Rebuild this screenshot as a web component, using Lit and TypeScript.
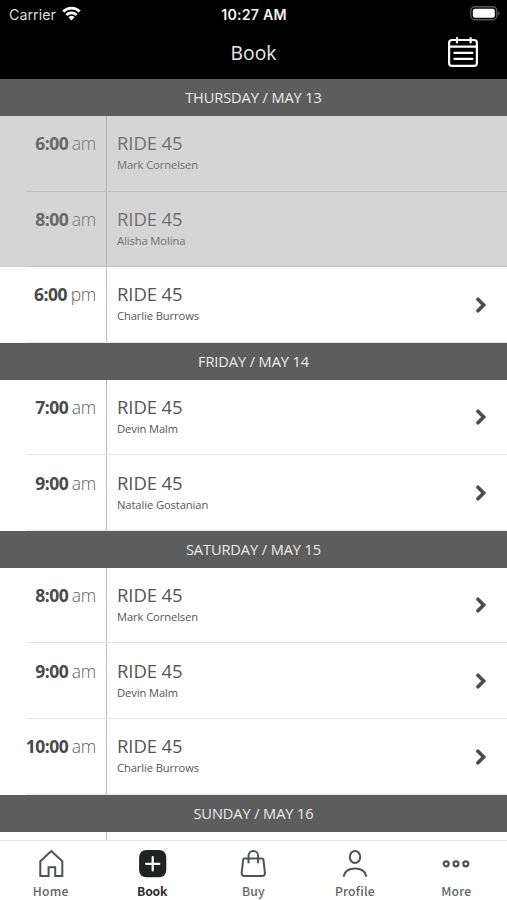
import { LitElement, html, css, svg } from "lit";
import { customElement, property } from "lit/decorators.js";
import { classMap } from "lit/directives/class-map.js";

interface Ride { time: string; half: string; coach: string; past?: boolean }
interface Day { label: string; rides: Ride[] }

const days: Day[] = [
  { label: "THURSDAY / MAY 13", rides: [
    { time: "6:00", half: "am", coach: "Mark Cornelsen", past: true },
    { time: "8:00", half: "am", coach: "Alisha Molina", past: true },
    { time: "6:00", half: "pm", coach: "Charlie Burrows" } ] },
  { label: "FRIDAY / MAY 14", rides: [
    { time: "7:00", half: "am", coach: "Devin Malm" },
    { time: "9:00", half: "am", coach: "Natalie Gostanian" } ] },
  { label: "SATURDAY / MAY 15", rides: [
    { time: "8:00", half: "am", coach: "Mark Cornelsen" },
    { time: "9:00", half: "am", coach: "Devin Malm" },
    { time: "10:00", half: "am", coach: "Charlie Burrows" } ] },
  { label: "SUNDAY / MAY 16", rides: [] },
];

@customElement("ride-row")
class RideRow extends LitElement {
  @property({ attribute: false }) ride!: Ride;
  static styles = css`
    :host { display: block; }
    .row { display: flex; height: 75.75px; color: #555; background: #fff; position: relative; }
    .past { background: #d5d5d5; color: #707070; }
    .time { width: 96px; flex: none; padding: 15.2px 10px 0 0; border-right: 1px solid #b9b9b9;
      display: flex; justify-content: flex-end; gap: 3.6px; font-size: 17.5px; line-height: 24px; }
    .time b { font-weight: 700; letter-spacing: -0.5px; color: #4a4a4a; }
    .past .time { border-color: #b2b2b2; }
    .past b { color: #686868; }
    .half { font-weight: 300; letter-spacing: -0.3px; color: #606060; }
    .past .half { color: #747474; }
    .info { flex: 1; padding: 14.2px 0 0 10px; }
    .name { font-size: 18.5px; line-height: 26px; letter-spacing: -0.1px; }
    .coach { font-size: 11.2px; line-height: 16px; margin-top: 1px; letter-spacing: -0.1px; }
    .chev { width: 12px; height: 18px; margin: 28.5px 20px 0 0; }
    .line { position: absolute; left: 26px; right: 0; bottom: 0; height: 1px; background: #e5e5e5; }
    .past .line { background: #c1c1c1; }
  `;
  render() {
    const r = this.ride;
    return html`<div class=${classMap({ row: true, past: !!r.past })}>
      <div class="time"><b>${r.time}</b><span class="half">${r.half}</span></div>
      <div class="info"><div class="name">RIDE 45</div><div class="coach">${r.coach}</div></div>
      ${r.past ? "" : html`<svg class="chev" viewBox="0 0 12 18"><path d="M2.9 3.2 8.7 9l-5.8 5.8" fill="none" stroke="#4c4c4c" stroke-width="3.6" stroke-linecap="round"/></svg>`}
      <div class="line"></div>
    </div>`;
  }
}

const tabs = [
  { label: "Home", icon: svg`<path d="M4.3 12.3 15.3 2l11 10.3V27h-7.1v-8.8h-6.6V27H4.3z" stroke-linejoin="miter"/>` },
  { label: "Book", icon: svg`<rect class="solid" x="2.1" y="1" width="27.2" height="27.2" rx="7"/><path class="plus" d="M15.7 8.2v13.2M9.1 14.8h13.2"/>` },
  { label: "Buy", icon: svg`<path d="M6.4 9.4h17.8q1 0 1.2 1l1.5 13.4q.2 3.2-2.6 3.2H6.3q-2.8 0-2.6-3.2l1.5-13.4q.2-1 1.2-1z"/><path d="M10.5 14.2V6.8a4.8 4.8 0 0 1 9.6 0v7.4"/>` },
  { label: "Profile", icon: svg`<ellipse cx="15" cy="8" rx="5.2" ry="6"/><path d="M3.8 27.8v-1c1.2-5 6-7.4 11.2-7.4s10 2.4 11.2 7.4v1"/>` },
  { label: "More", icon: svg`<g stroke-width="2.2"><circle cx="5.2" cy="14.8" r="2.5"/><circle cx="15" cy="14.8" r="2.5"/><circle cx="24.8" cy="14.8" r="2.5"/></g>` },
];

@customElement("app-root")
class AppRoot extends LitElement {
  static styles = css`
    :host { display: flex; flex-direction: column; width: 507px; height: 900px; overflow: hidden; background: #fff; font-family: "Open Sans", "Noto Sans", sans-serif; }
    .top { height: 79.2px; flex: none; background: #000; color: #ebebeb; }
    .status { height: 28px; display: grid; grid-template-columns: 1fr auto 1fr; align-items: center; font-family: Inter, Roboto, sans-serif; padding: 0 6px 0 9px; box-sizing: border-box; }
    .carrier { display: flex; align-items: center; gap: 6px; font-size: 14.3px; color: #dcdcdc; }
    .clock { font-weight: 600; font-size: 14.2px; letter-spacing: .2px; color: #f4f4f4; margin-left: -2px; }
    .wifi { width: 19px; height: 15px; margin-top: -2px; }
    .battery { width: 31px; height: 15px; justify-self: end; margin-top: -2px; }
    .bar { height: 51px; display: grid; grid-template-columns: 1fr auto 1fr; align-items: center; padding: 0 28px; }
    .title { grid-column: 2; font-size: 19.3px; line-height: 28px; margin-top: -2px; }
    .cal { width: 32px; height: 32px; justify-self: end; margin-top: -3px; }
    .list { flex: 1; min-height: 0; overflow: hidden; }
    .day { height: 36.6px; display: flex; align-items: center; justify-content: center; background: #5d5d5d; color: #ebebeb; font-size: 14.6px; letter-spacing: -0.1px; }
    .stub { width: 106px; height: 8px; border-right: 1px solid #b9b9b9; }
    .tabs { flex: none; height: 60px; box-sizing: border-box; border-top: 1px solid #e2e2e2; display: grid; grid-template-columns: repeat(5, 1fr); background: #fff; font-family: "Noto Sans CJK SC", "Noto Sans", sans-serif; }
    .tab { display: flex; flex-direction: column; align-items: center; color: #626466; font-size: 12.2px; font-weight: 500; letter-spacing: .2px; line-height: 16px; padding-top: 8px; }
    .tab svg { width: 30px; height: 30px; fill: none; stroke: #505355; stroke-width: 2; stroke-linejoin: round; margin-bottom: 4px; }
    .on { color: #2b2d2f; font-weight: 700; letter-spacing: -0.2px; }
    .solid { fill: #202224; stroke: none; }
    .tab .plus { stroke: #fff; stroke-width: 2.2; stroke-linecap: round; }
  `;
  render() {
    return html`
      <div class="top">
        <div class="status">
          <span class="carrier">Carrier
            <svg class="wifi" viewBox="0 0 20 15" fill="none" stroke="#fff" stroke-width="2.9"><path d="M1.3 5.4a12.4 12.4 0 0 1 17.4 0M4.6 9a7.7 7.7 0 0 1 10.8 0"/><path d="M10 14.8 6.8 11.4a4.6 4.6 0 0 1 6.4 0z" fill="#fff" stroke="none"/></svg>
          </span>
          <span class="clock">10:27 AM</span>
          <svg class="battery" viewBox="0 0 31 15"><rect x=".8" y=".8" width="26" height="13" rx="4" fill="none" stroke="#565656" stroke-width="1.4"/><rect x="2.8" y="2.8" width="22" height="9" rx="2.2" fill="#fff"/><path d="M28.4 5q2 2.3 0 4.6z" fill="#777"/></svg>
        </div>
        <div class="bar">
          <span class="title">Book</span>
          <svg class="cal" viewBox="0 0 32 32" fill="none" stroke="#fff" stroke-width="2.2" stroke-linecap="round"><rect x="2.1" y="4" width="27.8" height="25.9" rx="3"/><path d="M2 10.6h28M10 2v4.4M23.6 2v4.4"/><path d="M7.4 16.8h18M7.4 22.8h18"/></svg>
        </div>
      </div>
      <div class="list">
        ${days.map((d) => html`<div class="day">${d.label}</div>${d.rides.length
          ? d.rides.map((r) => html`<ride-row .ride=${r}></ride-row>`)
          : html`<div class="stub"></div>`}`)}
      </div>
      <div class="tabs">
        ${tabs.map((t) => html`<div class=${classMap({ tab: true, on: t.label === "Book" })}><svg viewBox="0 0 30 30">${t.icon}</svg><span>${t.label}</span></div>`)}
      </div>`;
  }
}
